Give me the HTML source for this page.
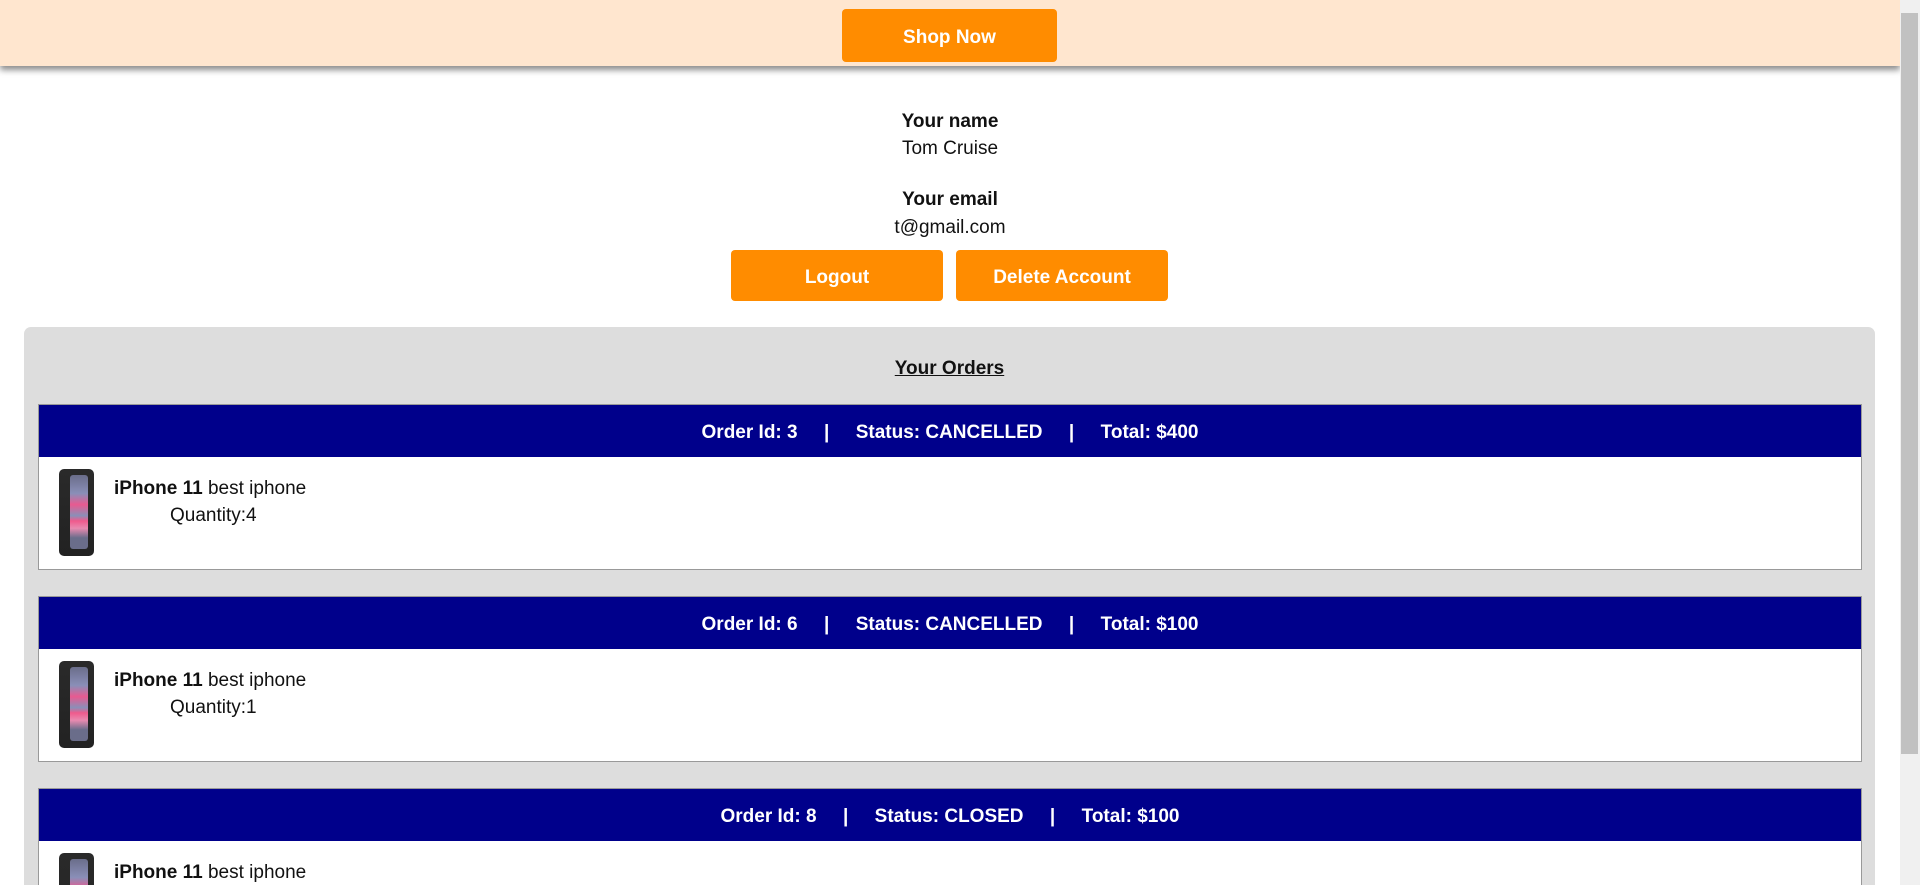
<!DOCTYPE html>
<html style="overflow:hidden;height:885px"><head><style>
*{box-sizing:border-box;margin:0;padding:0}
html,body{overflow:hidden}
body{width:1920px;height:885px;background:#fff;font-family:"Liberation Sans",sans-serif;color:#111;position:relative}
.wrap{position:absolute;left:0;top:0;width:1920px;height:885px;overflow:hidden}
.top{position:absolute;left:0;top:0;width:1900px;height:66px;background:#ffe6cf;box-shadow:0 4px 6px rgba(0,0,0,.45)}
.btn{position:absolute;background:#ff8c00;color:#fff;font-weight:bold;font-size:19px;border-radius:4px;display:flex;align-items:center;justify-content:center;padding-top:4px}
.sb{position:absolute;left:1900px;top:0;width:20px;height:885px;background:#f0f0f0}
.thumb{position:absolute;left:1901px;top:13px;width:17px;height:741px;background:#c1c1c1}
.c{position:absolute;left:0;width:1900px;text-align:center;font-size:19px}
.panel{position:absolute;left:24px;top:327px;width:1851px;height:558px;background:#ddd;border-radius:7px 7px 0 0}
.card{position:absolute;left:38px;width:1824px;height:166px;border:1px solid #999;background:#fff;overflow:hidden}
.hd{height:52px;background:#00008b;color:#fff;font-weight:bold;font-size:19px;display:flex;align-items:center;justify-content:center;white-space:pre;padding-top:4px}
.ph{position:absolute;left:20px;top:12px;width:35px;height:87px;border-radius:5px;background:linear-gradient(#2a2a2a,#222);}
.ph::after{content:"";position:absolute;left:11px;top:6px;width:18px;height:74px;border-radius:3px;background:linear-gradient(#6a6d8a 0%,#8a8fb8 25%,#e85a90 40%,#8a8fb8 55%,#f05a8c 62%,#e88ab0 72%,#6a6d8a 85%)}
.t{position:absolute;left:75px;top:18px;font-size:19px;line-height:27px}
</style></head><body><div class="wrap">
<div class="top"></div>
<div class="btn" style="left:842px;top:9px;width:215px;height:53px">Shop Now</div>
<div class="c" style="top:111px;font-weight:bold">Your name</div>
<div class="c" style="top:138px">Tom Cruise</div>
<div class="c" style="top:189px;font-weight:bold">Your email</div>
<div class="c" style="top:217px">t@gmail.com</div>
<div class="btn" style="left:731px;top:250px;width:212px;height:51px">Logout</div>
<div class="btn" style="left:956px;top:250px;width:212px;height:51px">Delete Account</div>
<div class="panel"></div>
<div class="c" style="top:358px;left:24px;width:1851px;font-weight:bold;text-decoration:underline">Your Orders</div>
<div class="card" style="top:404px"><div class="hd">Order Id: 3     |     Status: CANCELLED     |     Total: $400</div><div style="position:relative"><div class="ph"></div><div class="t"><b>iPhone 11</b> best iphone<br><span style="padding-left:56px">Quantity:4</span></div></div></div>
<div class="card" style="top:596px"><div class="hd">Order Id: 6     |     Status: CANCELLED     |     Total: $100</div><div style="position:relative"><div class="ph"></div><div class="t"><b>iPhone 11</b> best iphone<br><span style="padding-left:56px">Quantity:1</span></div></div></div>
<div class="card" style="top:788px;height:97px;border-bottom:none"><div class="hd">Order Id: 8     |     Status: CLOSED     |     Total: $100</div><div style="position:relative"><div class="ph"></div><div class="t"><b>iPhone 11</b> best iphone</div></div></div>
<div class="sb"></div><div class="thumb"></div>
</div></body></html>
